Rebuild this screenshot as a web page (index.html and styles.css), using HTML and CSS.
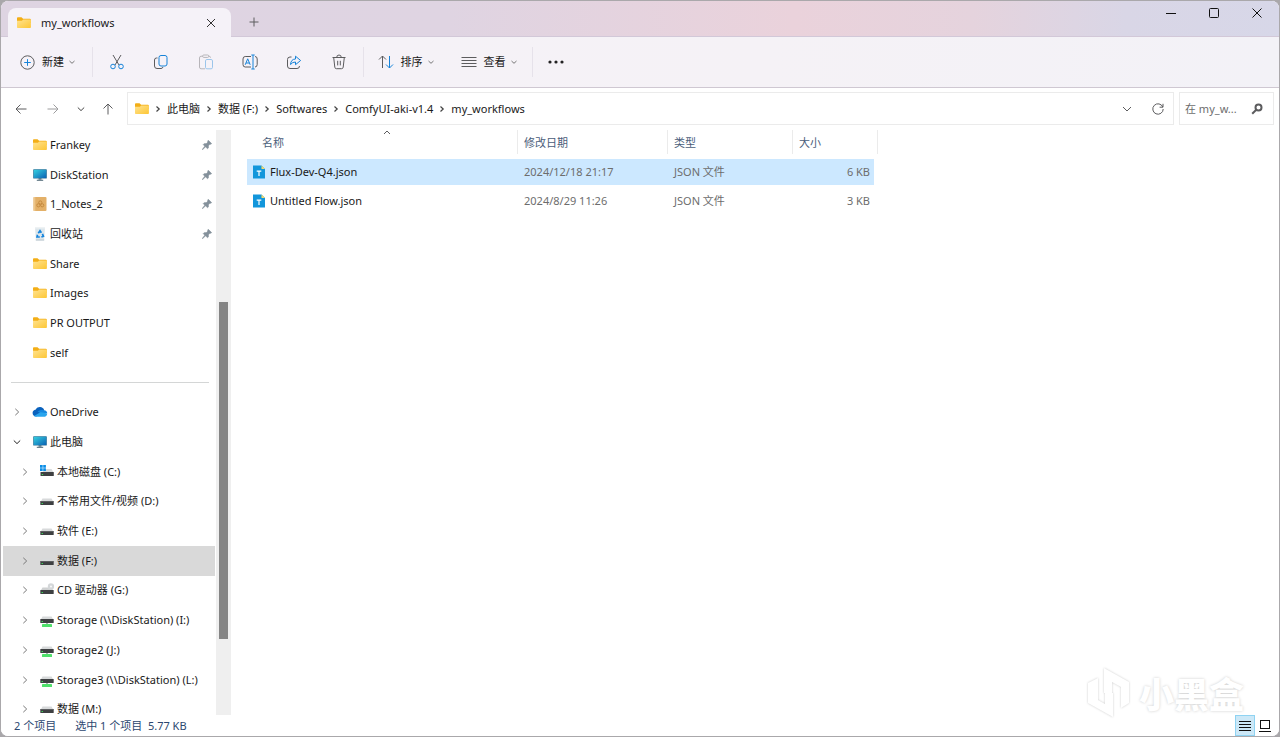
FILE: index.html
```html
<!DOCTYPE html>
<html lang="zh-CN">
<head>
  <meta charset="UTF-8">
  <meta name="viewport" content="width=device-width, initial-scale=1.0">
  <title>my_workflows</title>
  <link rel="stylesheet" href="styles.css">
</head>
<body>

  <!-- Shared icons -->
  <svg class="sprite" width="0" height="0" aria-hidden="true">
    <defs>
      <linearGradient id="g-folder" x1="0" y1="0" x2="1" y2="1">
        <stop offset="0" stop-color="#ffe391"/><stop offset="1" stop-color="#fdc634"/>
      </linearGradient>
      <linearGradient id="g-screen" x1="0" y1="0" x2="1" y2="1">
        <stop offset="0" stop-color="#35d0e0"/><stop offset="1" stop-color="#0b62b4"/>
      </linearGradient>
    </defs>
    <symbol id="i-folder" viewBox="0 0 14 12">
      <path d="M0 1.2Q0 .3.9.3h3.6l1.6 1.5h6.8q.9 0 .9.9V6H0z" fill="#f3ae16"/>
      <path d="M0 3.8h4.9l1.3-1.2h6.9q.8 0 .8.8v6.9q0 .8-.8.8H.8q-.8 0-.8-.8z" fill="url(#g-folder)"/>
    </symbol>
    <symbol id="i-pc" viewBox="0 0 14 12">
      <path d="M5.5 9h3v1.8h-3z" fill="#6e8492"/><path d="M3.8 10.8h6.4v1H3.8z" fill="#45606f"/>
      <rect x=".2" y=".2" width="13.6" height="9.4" rx=".6" fill="#2f7296"/>
      <rect x=".8" y=".8" width="12.4" height="8.2" fill="url(#g-screen)"/>
    </symbol>
    <symbol id="i-notes" viewBox="0 0 14 14">
      <rect x=".5" width="13" height="14" rx="1" fill="#e3b068"/>
      <path d="M.5 0h1.8v14H.5z" fill="#edc68a"/>
      <g fill="none" stroke="#c58a3f" stroke-width="1"><circle cx="7.3" cy="5.5" r="1.6"/><circle cx="5.4" cy="8.3" r="1.6"/><circle cx="9.2" cy="8.3" r="1.6"/></g>
    </symbol>
    <symbol id="i-bin" viewBox="0 0 14 14">
      <path d="M2 .5h10l-.9 13H2.9z" fill="#dde6eb"/><path d="M2 .5h10v1H2z" fill="#eef2f4"/><path d="M2.8 12.5h8.4v1H2.8z" fill="#b9c6cd"/>
      <path d="M5.3 6.2L7 3.8l1.4 2M9.4 6.9l1 2.4-2 .7M6.8 10H4l.5-2.3" fill="none" stroke="#1685dd" stroke-width="1.7"/>
    </symbol>
    <symbol id="i-cloud" viewBox="0 0 16 11">
      <path d="M4.2 10A3.7 3.7 0 0 1 .6 6.5C.5 4.7 1.9 3.2 3.8 3 4.8 1.3 6.4.5 8.1.6c2 0 3.6 1.3 4.1 3.1L8 8z" fill="#0a62bd"/>
      <path d="M5.6 5.1C7 3.8 9 3.2 12.1 3.7c1.9.2 3.2 1.5 3.2 3.2L9.7 7.2z" fill="#1688df"/>
      <path d="M2 9.5l6.4-3.7c2.4.2 5 .6 6.8 1.6-.2 1.8-1.6 2.9-3.4 2.9H4.2C3.3 10.3 2.5 10 2 9.5z" fill="#28a5ed"/>
    </symbol>
    <symbol id="i-drive" viewBox="0 0 14 14">
      <path d="M2.5 4.5h9l2 3.5H.5z" fill="#d8dadb"/>
      <rect x=".3" y="7" width="13.4" height="4" rx=".5" fill="#3e4042"/><path d="M.8 7h12.4v1H.8z" fill="#5c5e60"/>
      <rect x="1.6" y="9" width="1.3" height="1" fill="#3ee45b"/>
    </symbol>
    <symbol id="i-system" viewBox="0 0 14 14">
      <path d="M5.5 4h6l2 3.5H2z" fill="#d8dadb"/>
      <rect x=".5" y="7" width="13.3" height="4" rx=".5" fill="#3e4042"/><rect x="1.8" y="9" width="1.3" height="1" fill="#3ee45b"/>
      <path d="M0 0h2.7v2.7H0zM3.2 0h2.7v2.7H3.2zM0 3.2h2.7v2.7H0zM3.2 3.2h2.7v2.7H3.2z" fill="#0a8de6"/>
    </symbol>
    <symbol id="i-cd" viewBox="0 0 14 14">
      <path d="M2.5 4.5h9l2 3.5H.5z" fill="#cfd1d2"/>
      <circle cx="11" cy="3.5" r="3.2" fill="#d4d7d9"/><circle cx="11" cy="3.5" r=".9" fill="#fff"/>
      <rect x=".3" y="7" width="13.4" height="4" rx=".5" fill="#3e4042"/><rect x="1.6" y="9" width="1.3" height="1" fill="#3ee45b"/>
    </symbol>
    <symbol id="i-net" viewBox="0 0 14 14">
      <path d="M2.5 3.5h9l2 3.5H.5z" fill="#d8dadb"/>
      <rect x=".3" y="6" width="13.4" height="4" rx=".5" fill="#3e4042"/><rect x="1.6" y="8" width="1.3" height="1" fill="#3ee45b"/>
      <path d="M6 10h2v2H6z" fill="#aab0b3"/><rect x="2" y="11" width="10" height="3" rx=".5" fill="#4fe06c"/>
    </symbol>
    <symbol id="i-pin" viewBox="0 0 10 10">
      <path d="M6.3.3l3.4 3.3-.9.7-.8-.1-1.500 1.500-.1 2.300-.9.8-2-2L.7 9.700.2 9.400l2.500-3.200L1.200 4.500l.8-.8 2.300-.1 1.500-1.500L5.600 1z" fill="#84919b" stroke="#84919b" stroke-width=".5"/>
    </symbol>
    <symbol id="i-right" viewBox="0 0 8 8"><path d="M2.300.8L5.700 4 2.300 7.200"/></symbol>
    <symbol id="i-next" viewBox="0 0 8 8"><path d="M2.500 1.500L5.200 4 2.500 6.500"/></symbol>
    <symbol id="i-down" viewBox="0 0 8 8"><path d="M.8 2.500L4 5.600l3.200-3.100"/></symbol>
    <symbol id="i-menu" viewBox="0 0 8 8"><path d="M1.500 3L4 5.300 6.500 3"/></symbol>
    <symbol id="i-json" viewBox="0 0 12 14">
      <path d="M0 .5h8.500L12 4v9.500H0z" fill="#1296db"/><path d="M8.500.5L12 4H8.500z" fill="#f6d96b"/>
      <path d="M3.700 6.200h4.600M6 6.200V11" stroke="#fff" stroke-width="1.200"/>
    </symbol>
  </svg>

  <div class="window">
    <header class="titlebar">
      <div class="tab">
        <svg class="icon"><use href="#i-folder"/></svg>
        <span class="tab-name">my_workflows</span>
        <button class="tab-close" aria-label="关闭标签页"><svg width="10" height="10" viewBox="0 0 10 10" class="line dark"><path d="M1 1l8 8M9 1L1 9"/></svg></button>
      </div>
      <button class="tab-add" aria-label="新标签页"><svg width="10" height="10" viewBox="0 0 10 10" class="line"><path d="M5 .5v9M.5 5h9"/></svg></button>
      <div class="window-buttons">
        <button aria-label="最小化"><svg width="10" height="10" viewBox="0 0 10 10" class="line black"><path d="M0 5.500h10"/></svg></button>
        <button aria-label="最大化"><svg width="10" height="10" viewBox="0 0 10 10" class="line black"><rect x=".5" y=".5" width="9" height="9" rx="1"/></svg></button>
        <button aria-label="关闭"><svg width="10" height="10" viewBox="0 0 10 10" class="line black"><path d="M.5.5l9 9M9.500.5l-9 9"/></svg></button>
      </div>
    </header>

    <div class="toolbar">
      <button class="tool tool-new">
        <svg width="15" height="15" viewBox="0 0 15 15" class="line"><circle cx="7.500" cy="7.500" r="6.700"/><path d="M7.500 4.200v6.600M4.200 7.500h6.600" class="blue"/></svg>
        <span>新建</span>
        <svg class="caret"><use href="#i-menu"/></svg>
      </button>
      <div class="tool-icons">
        <button aria-label="剪切"><svg width="16" height="16" viewBox="0 0 16 16" class="line"><path d="M4 1l6 10M12 1L6 11"/><circle cx="4" cy="12.500" r="2.300" class="blue"/><circle cx="12" cy="12.500" r="2.300" class="blue"/></svg></button>
        <button aria-label="复制"><svg width="16" height="16" viewBox="0 0 16 16" class="line"><path d="M4.500 4H3.400Q1.500 4 1.500 6v6q0 2.500 2.500 2.500h4q1.500 0 2-1.500"/><rect x="6" y="1.500" width="8" height="10.500" rx="2" class="blue"/></svg></button>
        <button aria-label="粘贴" disabled><svg width="16" height="16" viewBox="0 0 16 16" class="line"><path d="M5 2.200H3Q1.500 2.200 1.500 4v9q0 1.800 1.500 1.800h4M10.500 2.200H11q1.500 0 1.500 1.500"/><rect x="4.700" y="1" width="6" height="2.400" rx="1"/><rect x="7.500" y="5.500" width="7" height="9.300" rx="1.400" class="blue"/></svg></button>
        <button aria-label="重命名"><svg width="16" height="16" viewBox="0 0 16 16" class="line"><path d="M9 2.500H3.200Q1 2.500 1 5v5.500q0 2.500 2.200 2.500H9M13 2.500q2.200 0 2.200 2.500v5.500q0 2.500-2.200 2.500"/><path d="M3.200 10.800l2.500-6 2.500 6M4.100 9h3.200M9.300 1h3.400M11 1v14M9.300 15h3.400" class="blue"/></svg></button>
        <button aria-label="共享"><svg width="16" height="16" viewBox="0 0 16 16" class="line"><path d="M5.500 3H4Q1.500 3 1.500 5.500V12q0 2.500 2.500 2.500h7q2.500 0 2.500-2.500"/><path d="M4.500 10.500q.4-5.300 5-5.500V2.200l5.100 4.300-5.100 4.200V8q-3-.1-5 2.500z" class="blue"/></svg></button>
        <button aria-label="删除"><svg width="16" height="16" viewBox="0 0 16 16" class="line"><path d="M1.500 3.500h13M5.700 3.500q0-2.500 2.300-2.500t2.300 2.500M2.700 3.500l1.100 9.700q.2 1.500 1.600 1.500h5.200q1.400 0 1.600-1.500l1.100-9.700M6.700 6.800v4.600M9.300 6.800v4.600"/></svg></button>
      </div>
      <button class="tool tool-sort">
        <svg width="16" height="14" viewBox="0 0 16 14" class="line"><path d="M4.500 13V1M1 4.500L4.500 1 8 4.500"/><path d="M11.500 1v12M8 9.500l3.500 3.500L15 9.500" class="blue"/></svg>
        <span>排序</span>
        <svg class="caret"><use href="#i-menu"/></svg>
      </button>
      <button class="tool tool-view">
        <svg width="16" height="12" viewBox="0 0 16 12" class="line"><path d="M.5 1.500h15M.5 4.500h15M.5 7.500h15M.5 10.500h15"/></svg>
        <span>查看</span>
        <svg class="caret"><use href="#i-menu"/></svg>
      </button>
      <button class="tool tool-more" aria-label="更多"><svg width="16" height="4" viewBox="0 0 16 4" fill="#222"><circle cx="2" cy="2" r="1.600"/><circle cx="8" cy="2" r="1.600"/><circle cx="14" cy="2" r="1.600"/></svg></button>
    </div>

    <div class="address-row">
      <div class="nav-buttons">
        <button aria-label="后退"><svg width="12" height="12" viewBox="0 0 12 12" class="line"><path d="M11.500 6H1M5.500 1.500L1 6l4.500 4.500"/></svg></button>
        <button aria-label="前进" class="faded"><svg width="12" height="12" viewBox="0 0 12 12" class="line"><path d="M.5 6H11M6.500 1.500L11 6l-4.500 4.500"/></svg></button>
        <button aria-label="最近浏览的位置"><svg class="caret dark"><use href="#i-down"/></svg></button>
        <button aria-label="上移"><svg width="12" height="12" viewBox="0 0 12 12" class="line"><path d="M6 11.500V1M1.500 5.500L6 1l4.500 4.500"/></svg></button>
      </div>
      <nav class="path" aria-label="地址">
        <svg class="icon"><use href="#i-folder"/></svg>
        <svg class="caret dark"><use href="#i-next"/></svg>
        <a href="#">此电脑</a>
        <svg class="caret dark"><use href="#i-next"/></svg>
        <a href="#">数据 (F:)</a>
        <svg class="caret dark"><use href="#i-next"/></svg>
        <a href="#">Softwares</a>
        <svg class="caret dark"><use href="#i-next"/></svg>
        <a href="#">ComfyUI-aki-v1.4</a>
        <svg class="caret dark"><use href="#i-next"/></svg>
        <a href="#">my_workflows</a>
        <div class="path-tools">
          <button aria-label="历史记录"><svg width="10" height="10" viewBox="0 0 10 10" class="line"><path d="M1 3l4 4 4-4"/></svg></button>
          <button aria-label="刷新"><svg width="12" height="12" viewBox="0 0 12 12" class="line"><path d="M10.800 4A5.200 5.200 0 1 0 11.200 6M11 .8v3.400H7.600"/></svg></button>
        </div>
      </nav>
      <div class="search">
        <input type="text" aria-label="搜索" placeholder="在 my_w...">
        <svg width="12" height="12" viewBox="0 0 12 12" class="line search-icon"><circle cx="7.500" cy="4.500" r="3"/><path d="M5.300 6.700l-4.100 4.100"/></svg>
      </div>
    </div>

    <main class="content">
      <aside class="sidebar">
        <ul class="tree">
          <li><svg class="icon"><use href="#i-folder"/></svg><a href="#">Frankey</a><svg class="pin"><use href="#i-pin"/></svg></li>
          <li><svg class="icon"><use href="#i-pc"/></svg><a href="#">DiskStation</a><svg class="pin"><use href="#i-pin"/></svg></li>
          <li><svg class="icon"><use href="#i-notes"/></svg><a href="#">1_Notes_2</a><svg class="pin"><use href="#i-pin"/></svg></li>
          <li><svg class="icon"><use href="#i-bin"/></svg><a href="#">回收站</a><svg class="pin"><use href="#i-pin"/></svg></li>
          <li><svg class="icon"><use href="#i-folder"/></svg><a href="#">Share</a></li>
          <li><svg class="icon"><use href="#i-folder"/></svg><a href="#">Images</a></li>
          <li><svg class="icon"><use href="#i-folder"/></svg><a href="#">PR OUTPUT</a></li>
          <li><svg class="icon"><use href="#i-folder"/></svg><a href="#">self</a></li>
          <li class="divider"></li>
          <li class="root"><svg class="caret"><use href="#i-right"/></svg><svg class="icon wide"><use href="#i-cloud"/></svg><a href="#">OneDrive</a></li>
          <li class="root"><svg class="caret open"><use href="#i-down"/></svg><svg class="icon"><use href="#i-pc"/></svg><a href="#">此电脑</a></li>
          <li class="drive"><svg class="caret"><use href="#i-right"/></svg><svg class="icon"><use href="#i-system"/></svg><a href="#">本地磁盘 (C:)</a></li>
          <li class="drive"><svg class="caret"><use href="#i-right"/></svg><svg class="icon"><use href="#i-drive"/></svg><a href="#">不常用文件/视频 (D:)</a></li>
          <li class="drive"><svg class="caret"><use href="#i-right"/></svg><svg class="icon"><use href="#i-drive"/></svg><a href="#">软件 (E:)</a></li>
          <li class="drive current"><svg class="caret"><use href="#i-right"/></svg><svg class="icon"><use href="#i-drive"/></svg><a href="#">数据 (F:)</a></li>
          <li class="drive"><svg class="caret"><use href="#i-right"/></svg><svg class="icon"><use href="#i-cd"/></svg><a href="#">CD 驱动器 (G:)</a></li>
          <li class="drive"><svg class="caret"><use href="#i-right"/></svg><svg class="icon"><use href="#i-net"/></svg><a href="#">Storage (\\DiskStation) (I:)</a></li>
          <li class="drive"><svg class="caret"><use href="#i-right"/></svg><svg class="icon"><use href="#i-net"/></svg><a href="#">Storage2 (J:)</a></li>
          <li class="drive"><svg class="caret"><use href="#i-right"/></svg><svg class="icon"><use href="#i-net"/></svg><a href="#">Storage3 (\\DiskStation) (L:)</a></li>
          <li class="drive"><svg class="caret"><use href="#i-right"/></svg><svg class="icon"><use href="#i-drive"/></svg><a href="#">数据 (M:)</a></li>
        </ul>
        <div class="scrollbar"><div class="thumb"></div></div>
      </aside>

      <section class="files">
        <table>
          <colgroup><col class="col-name"><col class="col-date"><col class="col-type"><col class="col-size"></colgroup>
          <thead>
            <tr>
              <th class="sorted">名称<svg width="8" height="5" viewBox="0 0 8 5" class="line sort-mark"><path d="M1 4l3-3 3 3"/></svg></th>
              <th>修改日期</th>
              <th>类型</th>
              <th>大小</th>
            </tr>
          </thead>
          <tbody>
            <tr class="selected">
              <td><div class="file"><svg><use href="#i-json"/></svg>Flux-Dev-Q4.json</div></td>
              <td>2024/12/18 21:17</td>
              <td>JSON 文件</td>
              <td>6 KB</td>
            </tr>
            <tr>
              <td><div class="file"><svg><use href="#i-json"/></svg>Untitled Flow.json</div></td>
              <td>2024/8/29 11:26</td>
              <td>JSON 文件</td>
              <td>3 KB</td>
            </tr>
          </tbody>
        </table>
      </section>
    </main>

    <footer class="statusbar">
      <span>2 个项目</span>
      <span>选中 1 个项目&nbsp; 5.77 KB</span>
      <div class="view-switch">
        <button class="active" aria-label="详细信息"><svg width="12" height="11" viewBox="0 0 12 11" class="line black"><path d="M0 1.500h12M0 4.500h12M0 7.500h12M0 10.500h12"/></svg></button>
        <button aria-label="大图标"><svg width="12" height="12" viewBox="0 0 12 12" class="line black"><rect x="1.500" y=".5" width="9" height="8"/><path d="M0 11.500h12"/></svg></button>
      </div>
    </footer>

    <div class="watermark">
      <svg width="44" height="52" viewBox="0 0 44 52"><path d="M17 1l25 14v21l-8 5V20l-9-5v11h-8zM11 11v22l7 4V26h8v24L1 36V16z"/></svg>
      <span>小黑盒</span>
    </div>
  </div>

</body>
</html>
```
FILE: styles.css
```css
* {
  box-sizing: border-box;
}

body {
  margin: 0;
  background: #a9a7aa;
  color: #191919;
  font-family: "Noto Sans", "Noto Sans CJK SC", sans-serif;
  font-size: 11px;
  line-height: 16px;
}

button {
  display: flex;
  align-items: center;
  justify-content: center;
  padding: 0;
  border: none;
  background: none;
  color: inherit;
  font: inherit;
}

a {
  color: inherit;
  text-decoration: none;
}

svg {
  flex: none;
}

.sprite {
  position: absolute;
}

.window {
  position: relative;
  display: flex;
  flex-direction: column;
  height: 100vh;
  border: 1px solid #aaa8ab;
  border-radius: 8px;
  background: #fff;
  overflow: hidden;
}

/* Icons */
.line {
  fill: none;
  stroke: #5c5c5e;
  stroke-width: 1;
}

.line .blue {
  stroke: #1683d8;
}

.line.dark {
  stroke: #333;
}

.line.black {
  stroke: #111;
}

.icon {
  width: 14px;
  height: 14px;
}

.icon.wide {
  width: 16px;
  margin: 0 -1px;
}

.caret {
  width: 8px;
  height: 8px;
  fill: none;
  stroke: #777;
  stroke-width: 1;
}

.caret.dark {
  stroke: #444;
}

.caret.open {
  stroke: #222;
}

/* Title bar */
.titlebar {
  display: flex;
  flex: none;
  height: 36px;
  padding: 7px 0 0 7px;
  border-bottom: 1px solid #d2c8d8;
  background: linear-gradient(90deg, #ded4e2 0%, #dfd4e2 35%, #ead2db 62%, #e5d3dd 76%, #d9d6e6 88%, #d7d7e8 100%);
}

.tab {
  display: flex;
  align-items: center;
  width: 223px;
  height: 29px;
  padding: 0 12px 0 9px;
  border-radius: 8px 8px 0 0;
  background: #f5f2f8;
}

.tab-name {
  flex: 1;
  margin-left: 10px;
}

.tab-close {
  width: 16px;
  height: 16px;
}

.tab-add {
  width: 30px;
  height: 28px;
  margin-left: 8px;
}

.window-buttons {
  display: flex;
  margin: -7px 1px 0 auto;
}

.window-buttons button {
  width: 43px;
  height: 24px;
}

/* Toolbar */
.toolbar {
  display: flex;
  align-items: center;
  flex: none;
  height: 51px;
  border-bottom: 1px solid #cfc8d2;
  background: linear-gradient(90deg, #f5f2f8, #f5f2f6 60%, #f3f2f7);
}

.tool {
  height: 30px;
  border-right: 1px solid #e6e2ea;
}

.tool span {
  margin: 0 4px 0 7px;
}

.tool-new {
  width: 92px;
  padding-left: 3px;
}

.tool-icons {
  display: flex;
  width: 271px;
  padding: 0 2px;
  border-right: 1px solid #e6e2ea;
}

.tool-icons button {
  flex: 1;
  height: 30px;
}

.tool-icons button:disabled {
  opacity: 0.4;
}

.tool-sort {
  width: 84px;
  border-right: none;
}

.tool-view {
  width: 85px;
  padding-right: 2px;
}

.tool-more {
  width: 46px;
  border-right: none;
}

/* Address row */
.address-row {
  display: flex;
  flex: none;
  gap: 5px;
  height: 42px;
  padding: 4px 5px 5px;
}

.nav-buttons {
  display: flex;
  justify-content: space-between;
  width: 116px;
  padding: 0 4px 0 5px;
}

.nav-buttons button {
  width: 20px;
}

.nav-buttons .faded {
  margin-left: 5px;
  opacity: 0.6;
}

.path {
  display: flex;
  align-items: center;
  flex: 1;
  gap: 5px;
  padding-left: 7px;
  border: 1px solid #ebebeb;
}

.path .caret {
  stroke-width: 1.2;
}

.path-tools {
  display: flex;
  margin-left: auto;
}

.path-tools button {
  width: 31px;
  height: 30px;
}

.search {
  display: flex;
  align-items: center;
  width: 95px;
  padding: 0 10px 0 5px;
  border: 1px solid #ebebeb;
}

.search input {
  flex: 1;
  width: 0;
  padding: 0;
  border: none;
  outline: none;
  background: none;
  font: inherit;
}

.search input::placeholder {
  color: #6d6d6d;
}

.search-icon {
  stroke-width: 2;
}

/* Content */
.content {
  display: flex;
  flex: 1;
  min-height: 0;
}

.sidebar {
  display: flex;
  width: 230px;
  overflow: hidden;
}

/* the last row runs on under the status bar */
.tree {
  display: flex;
  flex-direction: column;
  flex: 1;
  margin: 0 1px -9px 2px;
  padding: 0;
  list-style: none;
}

.tree li {
  display: flex;
  align-items: center;
  flex: 1;
  gap: 3px;
  padding-left: 30px;
  white-space: nowrap;
}

.tree .root {
  padding-left: 10px;
}

.tree .root .caret {
  margin-right: 9px;
}

.tree .drive {
  padding-left: 18px;
}

.tree .drive .caret {
  margin-right: 8px;
}

.tree .current {
  background: #d9d9d9;
}

.tree .divider::before {
  content: "";
  width: 198px;
  margin-left: -22px;
  border-top: 1px solid #d4d6d6;
}

.pin {
  width: 10px;
  height: 10px;
  margin: 0 3px 0 auto;
}

.scrollbar {
  display: grid;
  grid-template-rows: 172fr 337fr 76fr;
  width: 15px;
  padding: 0 3px;
  background: #efefef;
}

.thumb {
  grid-row: 2;
  background: #858585;
}

/* File list */
.files {
  flex: 1;
  padding-left: 16px;
}

table {
  width: 627px;
  table-layout: fixed;
  border-spacing: 0 3px;
  margin-top: -3px;
}

.col-name {
  width: 271px;
}

.col-date {
  width: 150px;
}

.col-type {
  width: 125px;
}

th {
  position: relative;
  height: 26px;
  padding: 0 6px;
  color: #4a5d7a;
  font-weight: normal;
  text-align: left;
}

th::after {
  content: "";
  position: absolute;
  top: 0;
  right: 0;
  height: 24px;
  border-right: 1px solid #ebebeb;
}

th:last-child::after {
  right: -4px;
}

th:first-child {
  padding-left: 15px;
}

.sort-mark {
  position: absolute;
  top: 0;
  left: 50%;
}

td {
  height: 26px;
  padding: 0 6px;
  color: #6d6d6d;
}

td:first-child {
  padding-left: 6px;
  color: #191919;
}

td:last-child {
  padding-right: 4px;
  text-align: right;
}

.selected td {
  background: #cce8ff;
}

.file {
  display: flex;
  align-items: center;
  gap: 5px;
}

.file svg {
  width: 12px;
  height: 14px;
}

/* Status bar */
.statusbar {
  display: flex;
  align-items: center;
  flex: none;
  gap: 19px;
  height: 21px;
  padding: 0 4px 0 13px;
  background: #fff;
  color: #2c4770;
}

.view-switch {
  display: flex;
  margin-left: auto;
}

.view-switch button {
  width: 20px;
  height: 21px;
  border: 1px solid transparent;
}

.view-switch .active {
  border-color: #8fd3f2;
  background: #cce8f7;
}

/* Watermark */
.watermark {
  position: absolute;
  right: 35px;
  bottom: 17px;
  display: flex;
  align-items: center;
  gap: 8px;
  color: #fff;
  font-family: "Noto Sans CJK SC", sans-serif;
  font-size: 35px;
  font-weight: 900;
  line-height: 52px;
  text-shadow: 0 0 3px #ccc;
  pointer-events: none;
}

.watermark svg {
  fill: #fff;
  filter: drop-shadow(0 0 1px #ccc);
}
```
